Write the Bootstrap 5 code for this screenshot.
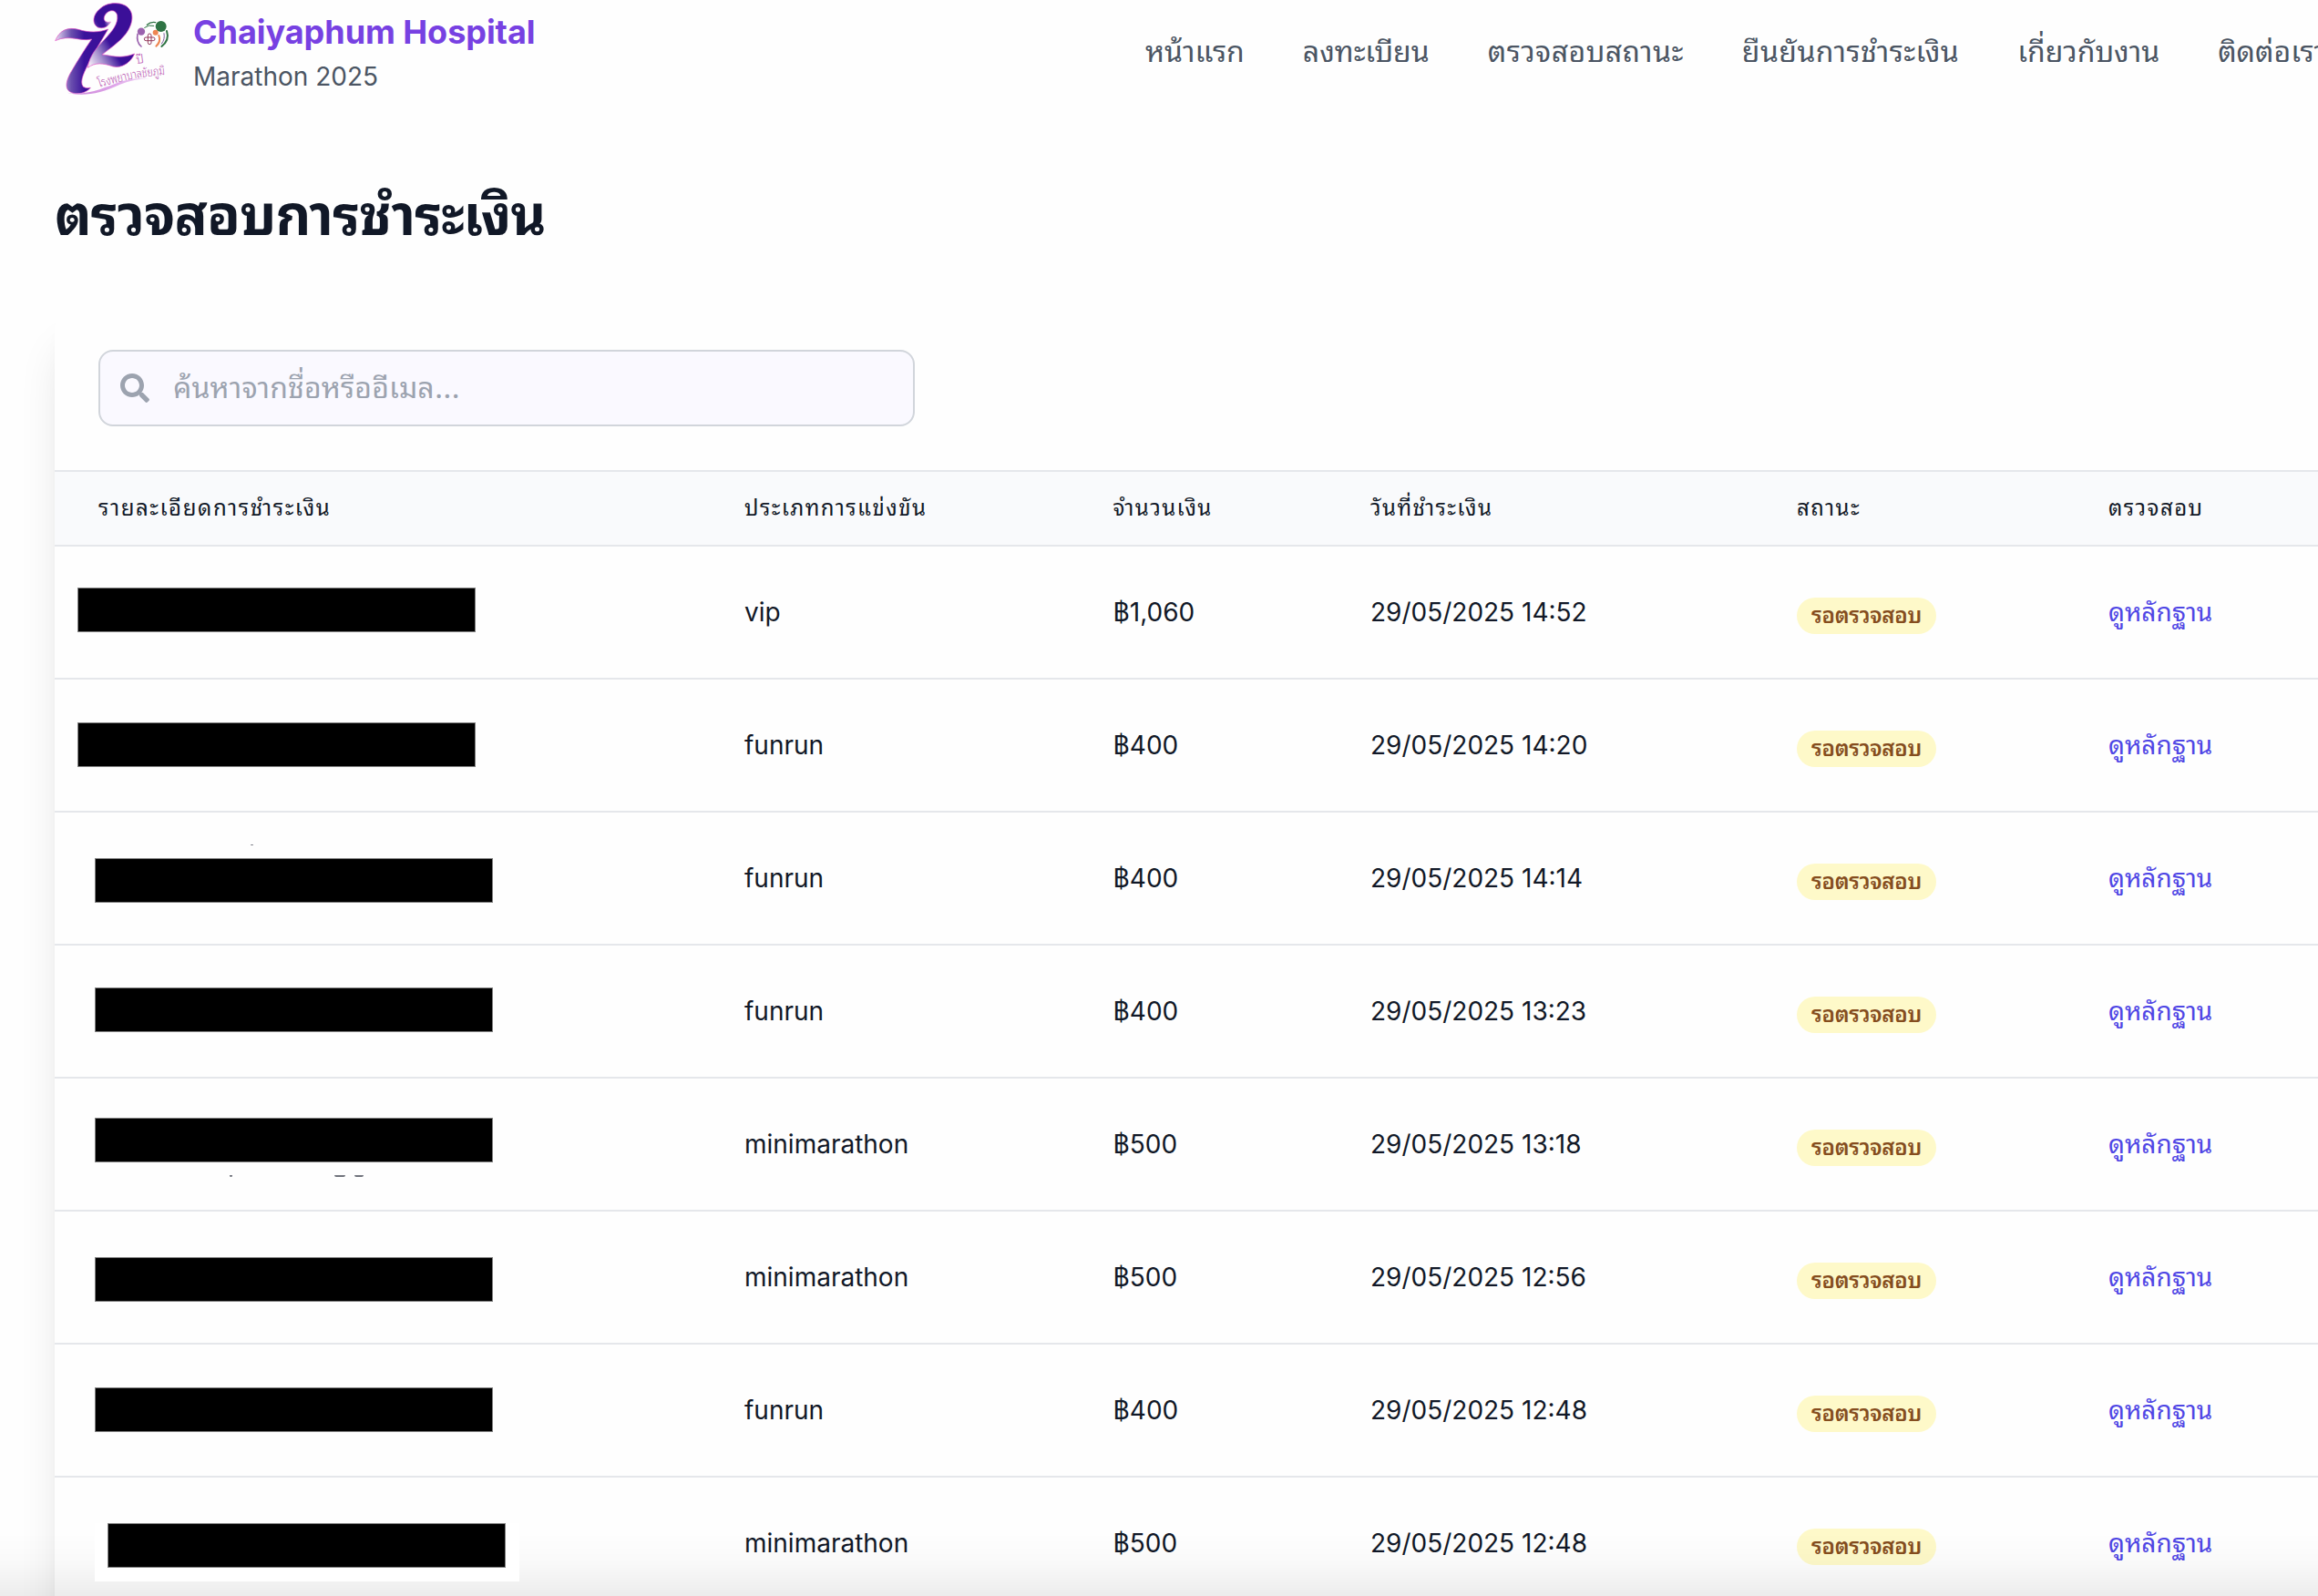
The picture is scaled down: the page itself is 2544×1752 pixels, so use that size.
<!DOCTYPE html>
<html lang="th">
<head>
<meta charset="utf-8">
<meta name="viewport" content="width=device-width, initial-scale=1">
<title>ตรวจสอบการชำระเงิน</title>
<link href="https://cdn.jsdelivr.net/npm/bootstrap@5.3.0/dist/css/bootstrap.min.css" rel="stylesheet">
<script src="https://cdn.jsdelivr.net/npm/bootstrap@5.3.0/dist/js/bootstrap.bundle.min.js" defer></script>
<style>
  body { font-family: Inter, "Noto Sans Thai Looped", "Noto Sans", sans-serif; color: #111827; background: #fefefe; height: 1752px; overflow: hidden; }
  .site-header { height: 112px; padding-left: 50px; }
  .brand-logo { width: 150px; height: 110px; }
  .brand-title { font-size: 36px; line-height: 46px; color: #7741e2; font-weight: 700; letter-spacing: -.05px; }
  .brand-sub { font-size: 28px; line-height: 52px; color: #4b5563; }
  .main-nav { gap: 64px; left: 1257px; font-size: 32px; line-height: 50px; }
  .main-nav .nav-link { color: #4b5563; white-space: nowrap; }
  .loose { letter-spacing: .45px; }
  .page-title { font-size: 60px; line-height: 80px; font-weight: 700; letter-spacing: -.85px; margin: 84px 0 0 60px; white-space: nowrap; }
  .pay-card { margin: 60px 0 0 60px; width: 2600px; height: 1500px; background: #fefefe; border-radius: 24px; box-shadow: 0 40px 50px -10px rgba(0,0,0,.12), 0 16px 20px -12px rgba(0,0,0,.1); }
  .search-wrap { padding: 48px; height: 180px; }
  .search-box { width: 896px; height: 84px; border: 2px solid #d1d5db; border-radius: 16px; background: #faf9ff; color: #9ca3af; font-size: 32px; padding-left: 22px; gap: 26px; letter-spacing: .15px; }
  .pay-table { table-layout: fixed; width: 2600px; margin: 0; border-collapse: separate; border-spacing: 0; --bs-table-bg: transparent; --bs-table-color: #111827; border-color: #e5e7eb; }
  .pay-table > thead th { height: 84px; padding: 0 48px; background: #f9fafc; border-top: 2px solid #e5e7eb; border-bottom: 2px solid #e5e7eb; font-size: 24px; line-height: 36px; font-weight: 400; letter-spacing: 1.45px; vertical-align: middle; white-space: nowrap; }
  .pay-table > thead th:first-child { letter-spacing: 1.6px; }
  .pay-table > tbody td { height: 146px; padding: 0 48px; border-bottom: 2px solid #e5e7eb; font-size: 28px; line-height: 40px; vertical-align: middle; white-space: nowrap; }
  .pay-table > tbody td.who { padding: 0; vertical-align: top; position: relative; }
  .hidden-name { width: 437px; height: 49px; background: #000; border: 1px solid #808080; }
  .pill { display: inline-flex; align-items: center; height: 40px; padding: 0 16px; border-radius: 20px; background: #fef9c9; color: #854d1e; font-size: 24px; line-height: 32px; font-weight: 600; letter-spacing: -.3px; position: relative; top: 3px; }
  .proof { color: #4f46e5; text-decoration: none; font-weight: 400; }
  .speck { position: absolute; height: 2px; background: #70737c; border-radius: 0 0 4px 4px; }
  .fade-foot { position: fixed; left: 0; right: 0; bottom: 0; height: 70px; background: linear-gradient(to bottom, rgba(0,0,0,0), rgba(0,0,0,.02) 50%, rgba(0,0,0,.07)); }
  .patch { position: absolute; left: 44px; top: 50px; width: 466px; height: 64px; background: #fff; z-index: 3; padding-left: 14px; }
</style>
</head>
<body>
<header class="site-header d-flex align-items-start position-relative">
  <svg class="brand-logo flex-shrink-0" viewBox="0 0 450 330" aria-hidden="true">
    <defs>
      <linearGradient id="flag" x1="0" x2="1" y1="0" y2="0"><stop offset="0" stop-color="#e9dcf2"/><stop offset=".3" stop-color="#6a4fae"/><stop offset=".55" stop-color="#3b129b"/><stop offset="1" stop-color="#3b0f98"/></linearGradient>
      <linearGradient id="curl" gradientUnits="userSpaceOnUse" x1="140" x2="235" y1="205" y2="150"><stop offset="0" stop-color="#f3ebf7"/><stop offset=".4" stop-color="#a58fcd"/><stop offset=".85" stop-color="#3b129b"/><stop offset="1" stop-color="#3b0f98"/></linearGradient>
      <linearGradient id="sweep" x1="0" x2="1" y1="0" y2="0"><stop offset="0" stop-color="#c77fd6"/><stop offset=".6" stop-color="#e0a8ea"/><stop offset="1" stop-color="#f3dff7"/></linearGradient>
      <radialGradient id="shine" cx="217" cy="72" r="24" gradientUnits="userSpaceOnUse"><stop offset="0" stop-color="#fff" stop-opacity=".85"/><stop offset="1" stop-color="#fff" stop-opacity="0"/></radialGradient>
      <path id="arc" d="M178 288Q290 252 400 246"/>
    </defs>
    <g stroke="#e24fc4" stroke-width="2.5" stroke-opacity=".8" stroke-linejoin="round">
      <path fill="url(#flag)" d="M32 134C46 100 72 88 108 97C146 109 178 106 206 96C186 130 166 162 148 196C128 236 110 268 124 286Q132 292 148 289C134 307 102 314 82 303C58 290 72 256 88 230C108 196 128 164 152 129C112 138 80 112 32 134Z"/>
      <path fill="url(#curl)" d="M172 90C150 76 158 46 178 30C200 8 238 6 262 18C296 38 288 80 264 112C242 140 214 158 186 180C216 182 246 196 293 177C282 204 252 226 222 219C190 208 164 204 139 223C144 180 172 154 196 128C220 102 240 78 236 50C230 26 200 34 193 56C190 70 202 76 214 72C206 88 190 96 172 90Z"/>
    </g>
    <path fill="url(#shine)" d="M172 90C165 80 185 60 193 56C190 70 202 76 214 72C206 88 190 96 172 90Z"/>
    <path d="M70 305C140 316 190 290 250 268Q300 254 345 259Q290 260 245 278C180 310 120 318 70 305Z" fill="url(#sweep)"/>
    <circle cx="315" cy="104" r="12.500" fill="#9b63ae"/><circle cx="380" cy="87" r="18" fill="#2f7344"/><circle cx="362" cy="107" r="9" fill="#ee8550"/>
    <g fill="none" stroke-linecap="round">
      <path d="M303 112Q298 138 315 153" stroke="#9b63ae" stroke-width="5"/>
      <path d="M399 102Q409 132 382 153" stroke="#2f7344" stroke-width="6"/>
      <path d="M334 82Q346 71 362 74" stroke="#2f7344" stroke-width="4"/>
      <path d="M326 91Q340 80 356 85" stroke="#2f7344" stroke-width="3"/>
      <path d="M373 117Q381 137 364 152" stroke="#ee8550" stroke-width="6"/>
      <path d="M390 110Q394 130 382 144" stroke="#7a5a9a" stroke-width="3"/>
    </g>
    <g fill="none" stroke="#93395b" stroke-width="3"><rect x="337" y="111" width="11" height="35" rx="5.500"/><rect x="325" y="123" width="35" height="11" rx="5.500"/></g>
    <g fill="#b64fae" font-family="'Noto Sans Thai Looped', sans-serif" font-weight="300">
      <text x="300" y="210" font-size="40" transform="rotate(-8 300 210)">ปี</text>
      <text font-size="40"><textPath href="#arc" textLength="220" lengthAdjust="spacingAndGlyphs">โรงพยาบาลชัยภูมิ</textPath></text>
    </g>
  </svg>
  <div class="d-flex flex-column ps-2 ms-1 pt-2 mt-1 text-nowrap">
    <span class="brand-title">Chaiyaphum Hospital</span>
    <span class="brand-sub">Marathon 2025</span>
  </div>
  <nav class="main-nav nav flex-nowrap position-absolute top-0 pt-4 mt-2">
    <a class="nav-link p-0">หน้าแรก</a>
    <a class="nav-link p-0">ลงทะเบียน</a>
    <a class="nav-link p-0 loose">ตรวจสอบสถานะ</a>
    <a class="nav-link p-0 loose">ยืนยันการชำระเงิน</a>
    <a class="nav-link p-0">เกี่ยวกับงาน</a>
    <a class="nav-link p-0">ติดต่อเรา</a>
  </nav>
</header>

<main>
  <h1 class="page-title">ตรวจสอบการชำระเงิน</h1>
  <section class="pay-card">
    <div class="search-wrap">
      <div class="search-box d-flex align-items-center">
        <svg width="32" height="32" viewBox="0 0 512 512" fill="#9ca3af" aria-hidden="true"><path d="M505 442.700L405.300 343c-4.500-4.500-10.600-7-17-7H372c27.600-35.300 44-79.700 44-128C416 93.100 322.900 0 208 0S0 93.100 0 208s93.100 208 208 208c48.300 0 92.700-16.400 128-44v16.300c0 6.400 2.500 12.500 7 17l99.700 99.700c9.400 9.400 24.600 9.400 33.900 0l28.300-28.300c9.400-9.400 9.400-24.600.1-34zM208 336c-70.700 0-128-57.200-128-128 0-70.700 57.200-128 128-128 70.700 0 128 57.200 128 128 0 70.700-57.200 128-128 128z"/></svg>
        <span>ค้นหาจากชื่อหรืออีเมล...</span>
      </div>
    </div>
    <table class="table pay-table">
      <colgroup><col style="width:709px"><col style="width:404.500px"><col style="width:282.500px"><col style="width:468px"><col style="width:342px"><col></colgroup>
      <thead><tr><th>รายละเอียดการชำระเงิน</th><th>ประเภทการแข่งขัน</th><th>จำนวนเงิน</th><th>วันที่ชำระเงิน</th><th>สถานะ</th><th>ตรวจสอบ</th></tr></thead>
      <tbody>
        <tr><td class="who"><div class="hidden-name" style="margin:45px 0 0 25px"></div></td><td>vip</td><td>฿1,060</td><td>29/05/2025 14:52</td><td><span class="pill">รอตรวจสอบ</span></td><td><a class="proof">ดูหลักฐาน</a></td></tr>
        <tr><td class="who"><div class="hidden-name" style="margin:47px 0 0 25px"></div></td><td>funrun</td><td>฿400</td><td>29/05/2025 14:20</td><td><span class="pill">รอตรวจสอบ</span></td><td><a class="proof">ดูหลักฐาน</a></td></tr>
        <tr><td class="who"><i class="speck" style="left:215px;top:35px;width:3px;height:1px"></i><div class="hidden-name" style="margin:50px 0 0 44px"></div></td><td>funrun</td><td>฿400</td><td>29/05/2025 14:14</td><td><span class="pill">รอตรวจสอบ</span></td><td><a class="proof">ดูหลักฐาน</a></td></tr>
        <tr><td class="who"><div class="hidden-name" style="margin:46px 0 0 44px"></div></td><td>funrun</td><td>฿400</td><td>29/05/2025 13:23</td><td><span class="pill">รอตรวจสอบ</span></td><td><a class="proof">ดูหลักฐาน</a></td></tr>
        <tr><td class="who"><i class="speck" style="left:192px;top:106px;width:3px"></i><i class="speck" style="left:307px;top:106px;width:12px"></i><i class="speck" style="left:329px;top:106px;width:10px"></i><div class="hidden-name" style="margin:43px 0 0 44px"></div></td><td>minimarathon</td><td>฿500</td><td>29/05/2025 13:18</td><td><span class="pill">รอตรวจสอบ</span></td><td><a class="proof">ดูหลักฐาน</a></td></tr>
        <tr><td class="who"><div class="hidden-name" style="margin:50px 0 0 44px"></div></td><td>minimarathon</td><td>฿500</td><td>29/05/2025 12:56</td><td><span class="pill">รอตรวจสอบ</span></td><td><a class="proof">ดูหลักฐาน</a></td></tr>
        <tr><td class="who"><div class="hidden-name" style="margin:47px 0 0 44px"></div></td><td>funrun</td><td>฿400</td><td>29/05/2025 12:48</td><td><span class="pill">รอตรวจสอบ</span></td><td><a class="proof">ดูหลักฐาน</a></td></tr>
        <tr><td class="who"><div class="patch"><div class="hidden-name"></div></div></td><td>minimarathon</td><td>฿500</td><td>29/05/2025 12:48</td><td><span class="pill">รอตรวจสอบ</span></td><td><a class="proof">ดูหลักฐาน</a></td></tr>
      </tbody>
    </table>
  </section>
</main>
<div class="fade-foot"></div>
</body>
</html>
